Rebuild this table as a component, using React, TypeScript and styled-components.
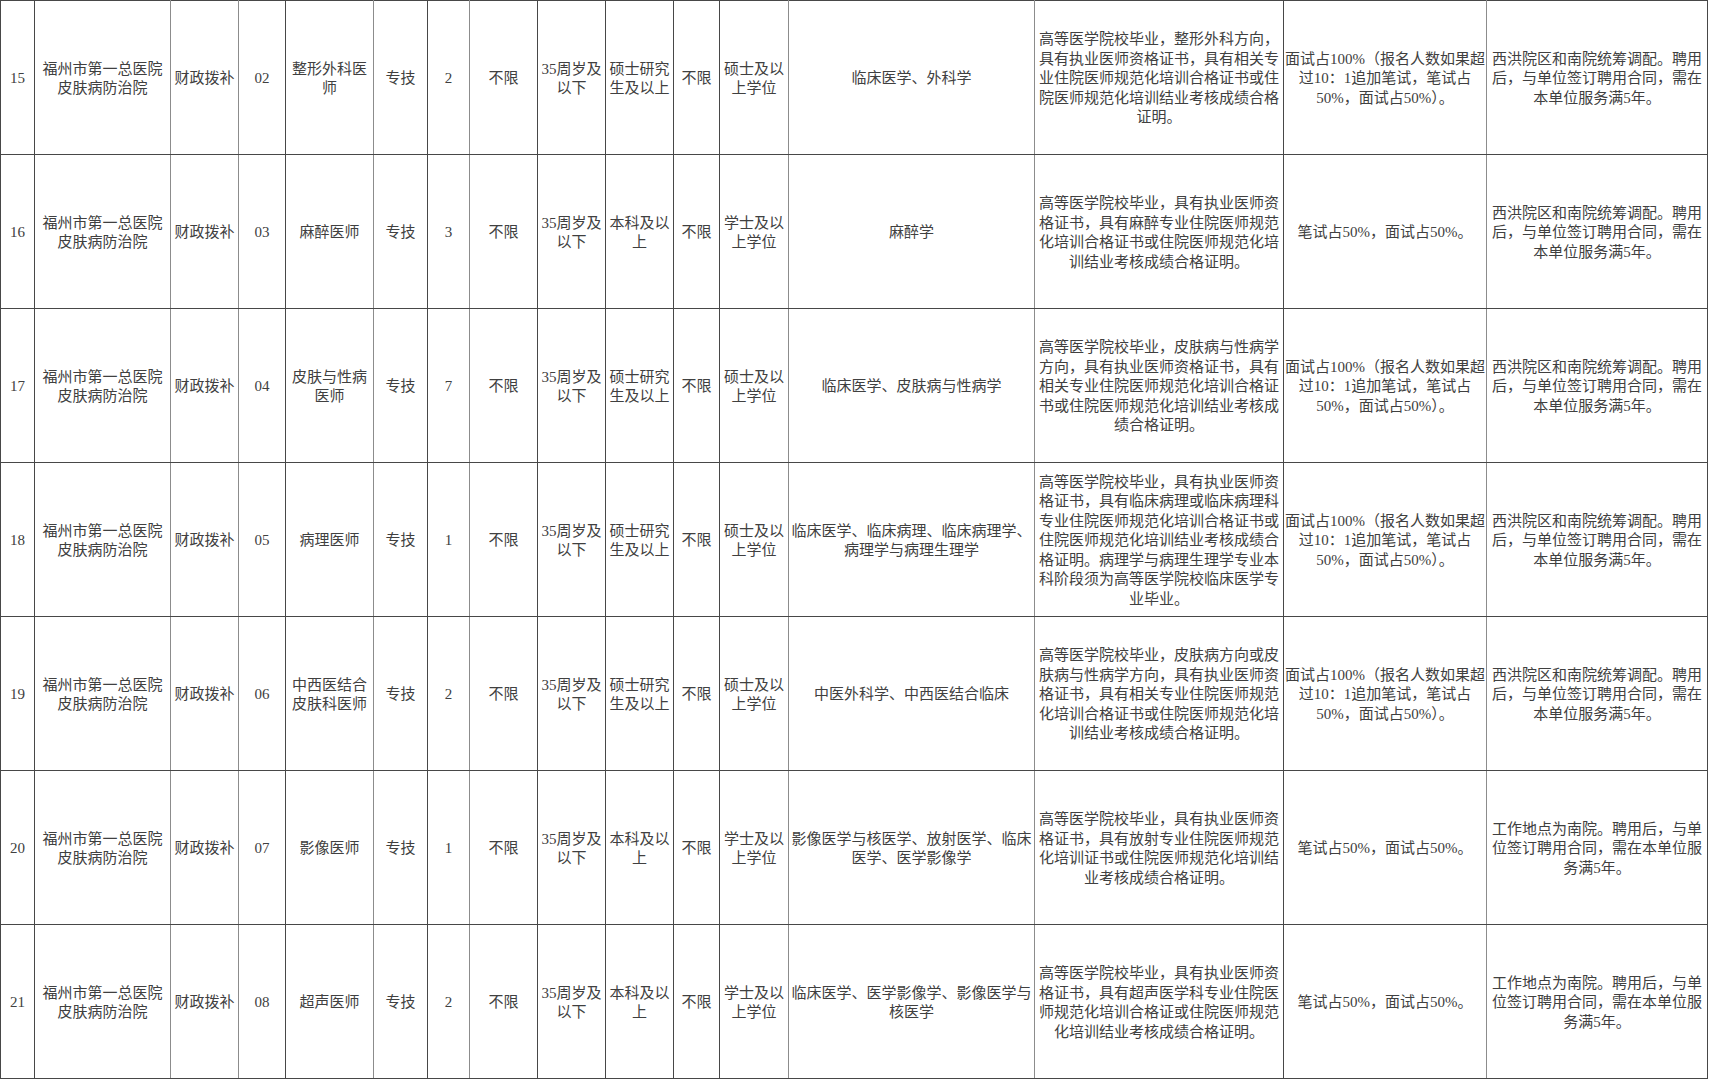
import styled, { createGlobalStyle } from "styled-components";

const line = "#474747";
const soft = "#8c8c8c";

const GlobalStyle = createGlobalStyle`
	html, body {
		margin: 0;
		padding: 0;
		background: #ffffff;
	}
	body {
		font-family: "Liberation Serif", "Noto Sans CJK SC", serif;
		color: #404040;
	}
`;

const Sheet = styled.table`
	width: 1708px;
	table-layout: fixed;
	border-collapse: collapse;
	font-family: "Liberation Serif", "Noto Sans CJK SC", serif;
	font-size: 15px;
	line-height: 19.5px;
`;

const Row = styled.tr`
	height: 154px;
`;

const Cell = styled.td<{ $softRight?: boolean }>`
	border: 1px solid ${line};
	border-right-color: ${(p) => (p.$softRight ? soft : line)};
	padding: 3px 1px 0;
	text-align: center;
	vertical-align: middle;
	white-space: pre;
	overflow: hidden;
	color: #404040;
`;

// column widths measured from the sheet, soft = lighter grid line on the right
const columns = [
	{ w: 34 },
	{ w: 136, soft: true },
	{ w: 68, soft: true },
	{ w: 47 },
	{ w: 88, soft: true },
	{ w: 54 },
	{ w: 42, soft: true },
	{ w: 68 },
	{ w: 68 },
	{ w: 68 },
	{ w: 46 },
	{ w: 69, soft: true },
	{ w: 246, soft: true },
	{ w: 249 },
	{ w: 203, soft: true },
	{ w: 221 },
];

const unit = "福州市第一总医院\n皮肤病防治院";
const fund = "财政拨补";
const age = "35周岁及\n以下";
const master = "硕士研究\n生及以上";
const bachelor = "本科及以\n上";
const masterDeg = "硕士及以\n上学位";
const bachelorDeg = "学士及以\n上学位";
const interview = "面试占100%（报名人数如果超\n过10：1追加笔试，笔试占\n50%，面试占50%）。";
const written = "笔试占50%，面试占50%。";
const xihong = "西洪院区和南院统筹调配。聘用\n后，与单位签订聘用合同，需在\n本单位服务满5年。";
const nanyuan = "工作地点为南院。聘用后，与单\n位签订聘用合同，需在本单位服\n务满5年。";

type Post = {
	no: string;
	code: string;
	name: string;
	count: string;
	edu: string;
	degree: string;
	major: string;
	need: string;
	exam: string;
	note: string;
};

const posts: Post[] = [
	{
		no: "15",
		code: "02",
		name: "整形外科医\n师",
		count: "2",
		edu: master,
		degree: masterDeg,
		major: "临床医学、外科学",
		need: "高等医学院校毕业，整形外科方向，\n具有执业医师资格证书，具有相关专\n业住院医师规范化培训合格证书或住\n院医师规范化培训结业考核成绩合格\n证明。",
		exam: interview,
		note: xihong,
	},
	{
		no: "16",
		code: "03",
		name: "麻醉医师",
		count: "3",
		edu: bachelor,
		degree: bachelorDeg,
		major: "麻醉学",
		need: "高等医学院校毕业，具有执业医师资\n格证书，具有麻醉专业住院医师规范\n化培训合格证书或住院医师规范化培\n训结业考核成绩合格证明。",
		exam: written,
		note: xihong,
	},
	{
		no: "17",
		code: "04",
		name: "皮肤与性病\n医师",
		count: "7",
		edu: master,
		degree: masterDeg,
		major: "临床医学、皮肤病与性病学",
		need: "高等医学院校毕业，皮肤病与性病学\n方向，具有执业医师资格证书，具有\n相关专业住院医师规范化培训合格证\n书或住院医师规范化培训结业考核成\n绩合格证明。",
		exam: interview,
		note: xihong,
	},
	{
		no: "18",
		code: "05",
		name: "病理医师",
		count: "1",
		edu: master,
		degree: masterDeg,
		major: "临床医学、临床病理、临床病理学、\n病理学与病理生理学",
		need: "高等医学院校毕业，具有执业医师资\n格证书，具有临床病理或临床病理科\n专业住院医师规范化培训合格证书或\n住院医师规范化培训结业考核成绩合\n格证明。病理学与病理生理学专业本\n科阶段须为高等医学院校临床医学专\n业毕业。",
		exam: interview,
		note: xihong,
	},
	{
		no: "19",
		code: "06",
		name: "中西医结合\n皮肤科医师",
		count: "2",
		edu: master,
		degree: masterDeg,
		major: "中医外科学、中西医结合临床",
		need: "高等医学院校毕业，皮肤病方向或皮\n肤病与性病学方向，具有执业医师资\n格证书，具有相关专业住院医师规范\n化培训合格证书或住院医师规范化培\n训结业考核成绩合格证明。",
		exam: interview,
		note: xihong,
	},
	{
		no: "20",
		code: "07",
		name: "影像医师",
		count: "1",
		edu: bachelor,
		degree: bachelorDeg,
		major: "影像医学与核医学、放射医学、临床\n医学、医学影像学",
		need: "高等医学院校毕业，具有执业医师资\n格证书，具有放射专业住院医师规范\n化培训证书或住院医师规范化培训结\n业考核成绩合格证明。",
		exam: written,
		note: nanyuan,
	},
	{
		no: "21",
		code: "08",
		name: "超声医师",
		count: "2",
		edu: bachelor,
		degree: bachelorDeg,
		major: "临床医学、医学影像学、影像医学与\n核医学",
		need: "高等医学院校毕业，具有执业医师资\n格证书，具有超声医学科专业住院医\n师规范化培训合格证或住院医师规范\n化培训结业考核成绩合格证明。",
		exam: written,
		note: nanyuan,
	},
];

export default function App(): JSX.Element {
	return (
		<>
			<GlobalStyle />
			<Sheet>
				<colgroup>
					{columns.map((c, i) => (
						<col key={i} style={{ width: c.w }} />
					))}
				</colgroup>
				<tbody>
					{posts.map((p) => {
						const cells = [
							p.no,
							unit,
							fund,
							p.code,
							p.name,
							"专技",
							p.count,
							"不限",
							age,
							p.edu,
							"不限",
							p.degree,
							p.major,
							p.need,
							p.exam,
							p.note,
						];
						return (
							<Row key={p.no}>
								{cells.map((text, i) => (
									<Cell key={i} $softRight={columns[i].soft}>
										{text}
									</Cell>
								))}
							</Row>
						);
					})}
				</tbody>
			</Sheet>
		</>
	);
}
